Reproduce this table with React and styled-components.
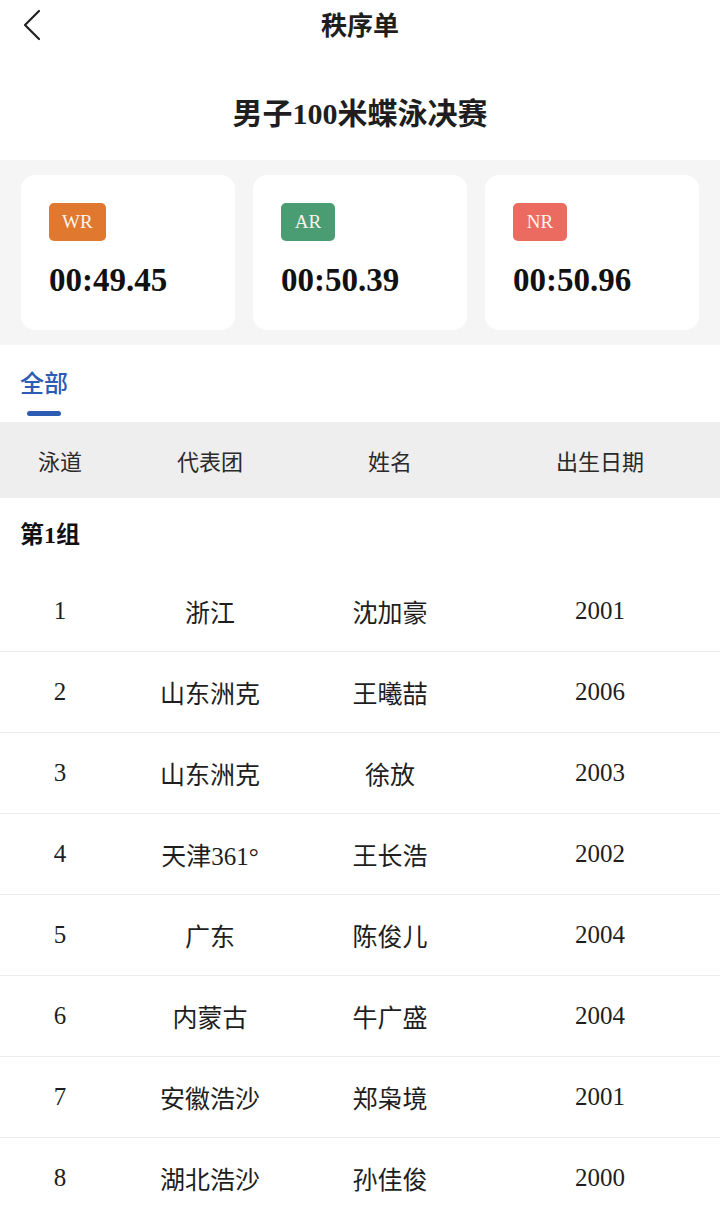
import styled, { createGlobalStyle } from "styled-components";

const GlobalStyle = createGlobalStyle`
    * { box-sizing: border-box; }
    body {
        margin: 0;
        background: #fff;
        font-family: "Liberation Serif", "Noto Sans CJK SC", serif;
        color: #1e1e1e;
    }
`;

const records = [
    { tag: "WR", color: "#e0782f", time: "00:49.45" },
    { tag: "AR", color: "#4a9d72", time: "00:50.39" },
    { tag: "NR", color: "#ec6b61", time: "00:50.96" },
];

const rows = [
    ["1", "浙江", "沈加豪", "2001"],
    ["2", "山东洲克", "王曦喆", "2006"],
    ["3", "山东洲克", "徐放", "2003"],
    ["4", "天津361°", "王长浩", "2002"],
    ["5", "广东", "陈俊儿", "2004"],
    ["6", "内蒙古", "牛广盛", "2004"],
    ["7", "安徽浩沙", "郑枭境", "2001"],
    ["8", "湖北浩沙", "孙佳俊", "2000"],
];

export default function App() {
    return (
        <Page>
            <GlobalStyle />
            <NavBar>
                <BackButton>
                    <svg width="20" height="32" viewBox="0 0 20 32" fill="none">
                        <path d="M17 2 L3 16 L17 30" stroke="#222" strokeWidth="2.2" strokeLinecap="round" strokeLinejoin="round" />
                    </svg>
                </BackButton>
                <NavTitle>秩序单</NavTitle>
            </NavBar>

            <EventTitle>男子100米蝶泳决赛</EventTitle>

            <RecordBand>
                {records.map((r) => (
                    <RecordCard key={r.tag}>
                        <Badge $color={r.color}>{r.tag}</Badge>
                        <RecordTime>{r.time}</RecordTime>
                    </RecordCard>
                ))}
            </RecordBand>

            <Tabs>
                <Tab>全部</Tab>
            </Tabs>

            <HeadRow>
                <HeadCell>泳道</HeadCell>
                <HeadCell>代表团</HeadCell>
                <HeadCell>姓名</HeadCell>
                <HeadCell>出生日期</HeadCell>
            </HeadRow>

            <GroupTitle>第1组</GroupTitle>

            {rows.map((row) => (
                <Row key={row[0]}>
                    {row.map((cell, i) => (
                        <Cell key={i}>{cell}</Cell>
                    ))}
                </Row>
            ))}
        </Page>
    );
}

const Page = styled.div`
    width: 720px;
    min-height: 1208px;
    background: #fff;
`;

const NavBar = styled.div`
    position: relative;
    height: 54px;
    display: flex;
    align-items: center;
    justify-content: center;
`;

const BackButton = styled.div`
    position: absolute;
    left: 22px;
    top: 8px;
    width: 24px;
    height: 34px;
    display: flex;
    align-items: center;
`;

const NavTitle = styled.h1`
    margin: 0;
    font-size: 26px;
    font-weight: 700;
    line-height: 1;
`;

const EventTitle = styled.h2`
    margin: 0;
    height: 106px;
    display: flex;
    align-items: center;
    justify-content: center;
    padding-top: 8px;
    font-size: 30px;
    font-weight: 700;
`;

const RecordBand = styled.div`
    background: #f5f5f5;
    padding: 15px 21px 15px 21px;
    display: grid;
    grid-template-columns: repeat(3, 1fr);
    gap: 18px;
`;

const RecordCard = styled.div`
    background: #fff;
    border-radius: 14px;
    height: 155px;
    padding: 28px 28px 0;
`;

const Badge = styled.div`
    width: fit-content;
    min-width: 54px;
    height: 38px;
    padding: 0 13px;
    border-radius: 5px;
    background: ${(p) => p.$color};
    color: #fdf3ec;
    font-family: "Liberation Serif", serif;
    font-size: 19px;
    display: flex;
    align-items: center;
    justify-content: center;
`;

const RecordTime = styled.div`
    margin-top: 23px;
    font-family: "Liberation Serif", serif;
    font-size: 33px;
    font-weight: 700;
    line-height: 1;
    color: #111;
`;

const Tabs = styled.div`
    height: 77px;
    padding: 0 20px;
    display: flex;
`;

const Tab = styled.div`
    position: relative;
    padding-top: 25px;
    font-family: "Noto Sans CJK SC", sans-serif;
    font-size: 24px;
    font-weight: 500;
    color: #2c5cb4;
    line-height: 1;

    &::after {
        content: "";
        position: absolute;
        left: 7px;
        right: 7px;
        top: 66px;
        height: 5px;
        border-radius: 3px;
        background: #2c5cb4;
    }
`;

const columns = "120px 180px 180px 1fr";

const HeadRow = styled.div`
    display: grid;
    grid-template-columns: ${columns};
    height: 76px;
    align-items: center;
    background: #eeeeee;
`;

const HeadCell = styled.div`
    text-align: center;
    font-family: "Noto Sans CJK SC", sans-serif;
    font-size: 22px;
    color: #2a2a2a;
`;

const GroupTitle = styled.div`
    height: 73px;
    padding: 0 20px 4px;
    display: flex;
    align-items: center;
    font-size: 24px;
    font-weight: 700;
    color: #111;
`;

const Row = styled.div`
    display: grid;
    grid-template-columns: ${columns};
    height: 81px;
    align-items: center;
    border-bottom: 1px solid #ececec;
`;

const Cell = styled.div`
    text-align: center;
    font-size: 25px;
    color: #1e1e1e;
`;
